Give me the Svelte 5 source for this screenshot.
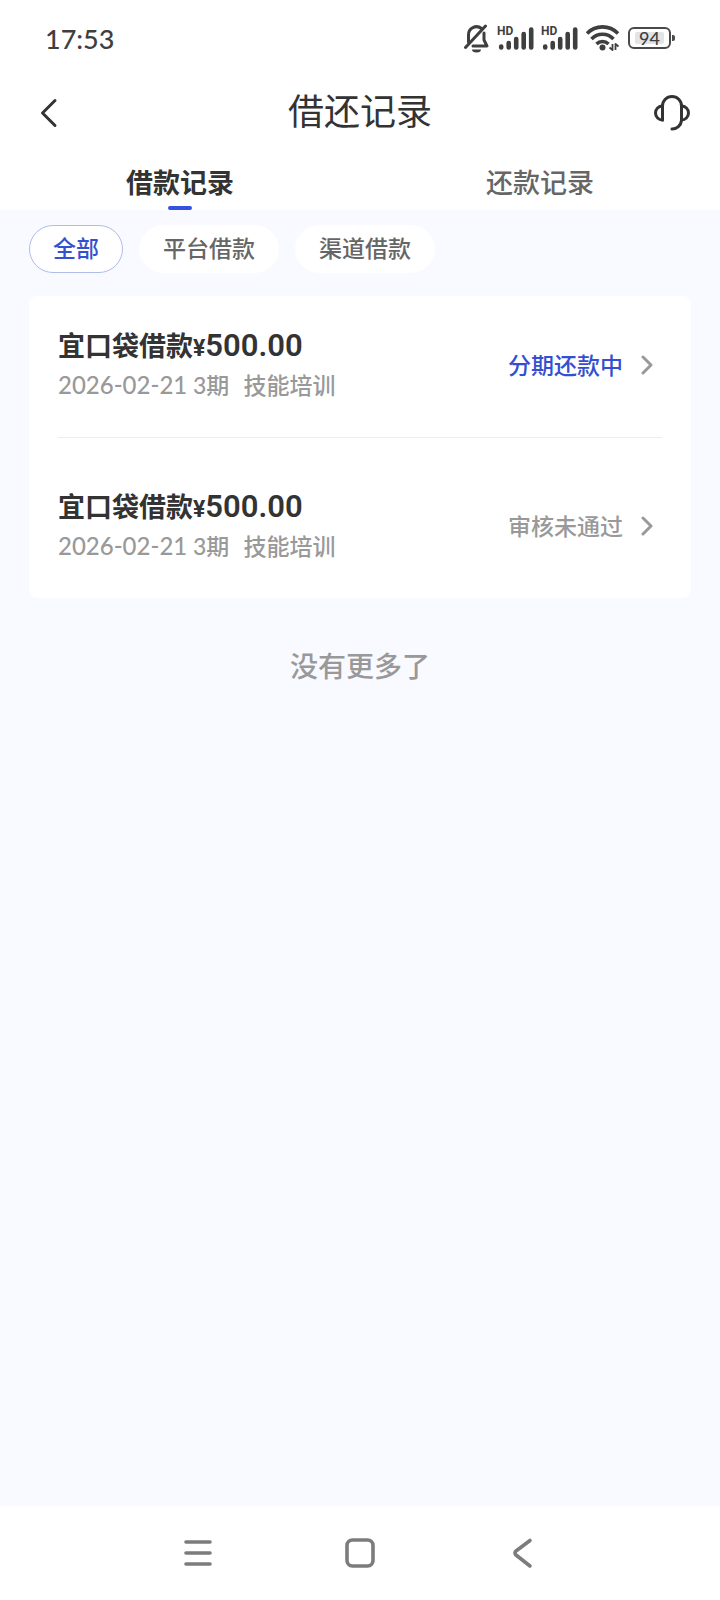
<script>
  const tabs = ['借款记录', '还款记录'];
  const filters = ['全部', '平台借款', '渠道借款'];
  const records = [
    { id: 1, name: '宜口袋借款', amount: '500.00', date: '2026-02-21', term: '3期', usage: '技能培训', status: '分期还款中', active: true },
    { id: 2, name: '宜口袋借款', amount: '500.00', date: '2026-02-21', term: '3期', usage: '技能培训', status: '审核未通过', active: false },
  ];

  let currentTab = $state(0);
  let currentFilter = $state(0);
</script>

{#snippet signal()}
  <svg class="signal" viewBox="0 0 36 28">
    <text x="-1" y="11">HD</text>
    <path d="M3.200 22.500v1M10.700 19v4.500M18.200 15v8.500M25.700 10v13.500M33.200 5.500v18" />
  </svg>
{/snippet}

<div class="page">
  <div class="status-bar">
    <time>17:53</time>
    <div class="indicators">
      <svg class="bell" viewBox="0 0 26 30" aria-hidden="true">
        <path class="line" d="M4.500 19V12a8 8 0 0 1 13-6.500M20 10v7l3 6H9" />
        <path class="line" d="M1.500 24.500L21.500 3" />
        <path d="M8 26.500h9a4.500 3 0 0 1-9 0z" fill="#3f3f3f" />
      </svg>
      {@render signal()}
      {@render signal()}
      <svg class="wifi" viewBox="0 0 34 26" aria-hidden="true">
        <path d="M1 8.500a21.500 21.500 0 0 1 31 0M5.500 14a15 15 0 0 1 22 0M10.500 19a8.500 8.500 0 0 1 12 0" />
        <circle cx="16.500" cy="22.500" r="3" />
        <path class="arrows" d="M26.500 19v6l-3-2.500M29.500 25v-6l3 2.500" />
      </svg>
      <div class="battery"><span>94</span></div>
    </div>
  </div>

  <header>
    <button class="icon-btn" aria-label="返回">
      <svg class="back" viewBox="0 0 18 30"><path d="M15 2.500L2.500 15 15 27.500" /></svg>
    </button>
    <h1>借还记录</h1>
    <button class="icon-btn end" aria-label="客服">
      <svg class="headset" viewBox="0 0 38 38">
        <path d="M9.500 26V12a9.500 9.500 0 0 1 19 0v14.500a9.500 9.500 0 0 1-9.500 8.500" />
        <path d="M9.500 12a7 7 0 0 0 0 14M28.500 12a7 7 0 0 1 0 14" />
      </svg>
    </button>
  </header>

  <nav class="tabs">
    {#each tabs as tab, i}
      <button class:active={currentTab === i} onclick={() => (currentTab = i)}>{tab}</button>
    {/each}
  </nav>

  <main>
    <div class="filters">
      {#each filters as filter, i}
        <button class:active={currentFilter === i} onclick={() => (currentFilter = i)}>{filter}</button>
      {/each}
    </div>

    <ul class="card">
      {#each records as record (record.id)}
        <li>
          <a href="#record-{record.id}">
            <div class="info">
              <strong>{record.name}<span class="yen">¥</span><span class="amount">{record.amount}</span></strong>
              <p><span class="date">{record.date}</span> {record.term}<span class="usage">{record.usage}</span></p>
            </div>
            <span class="state" class:active={record.active}>{record.status}</span>
            <svg class="chevron" viewBox="0 0 12 20" aria-hidden="true"><path d="M2 2l8 8-8 8" /></svg>
          </a>
        </li>
      {/each}
    </ul>

    <p class="end-text">没有更多了</p>
  </main>

  <div class="system-nav">
    <button aria-label="最近任务">
      <svg viewBox="0 0 32 32"><path d="M4 5h24M4 16h24M4 27h24" /></svg>
    </button>
    <button aria-label="主屏幕">
      <svg viewBox="0 0 32 32"><rect x="3" y="3" width="26" height="26" rx="5.500" /></svg>
    </button>
    <button aria-label="系统返回">
      <svg viewBox="0 0 32 32"><path d="M24 3.500L10 14a2.500 2.500 0 0 0 0 4l14 11" /></svg>
    </button>
  </div>
</div>

<style>
  :global(body) {
    margin: 0;
    background: #f8faff;
  }

  .page {
    display: flex;
    flex-direction: column;
    min-height: 100vh;
    color: #333;
    font-family: Lato, 'Noto Sans CJK SC', sans-serif;
  }

  button {
    padding: 0;
    border: 0;
    background: none;
    color: inherit;
    font: inherit;
    cursor: pointer;
  }

  svg {
    display: block;
    flex: none;
    fill: none;
    stroke-linecap: round;
    stroke-linejoin: round;
  }

  .status-bar {
    display: flex;
    align-items: center;
    justify-content: space-between;
    height: 76px;
    padding: 0 45px;
    background: #fff;
  }

  time {
    color: #3f3f3f;
    font-family: Lato, sans-serif;
    font-size: 27px;
    font-weight: 500;
  }

  .indicators {
    display: flex;
    align-items: center;
    gap: 8px;
  }

  .bell {
    width: 26px;
    height: 30px;
  }

  .bell .line {
    stroke: #3f3f3f;
    stroke-width: 3;
  }

  .signal {
    width: 36px;
    height: 28px;
    overflow: visible;
  }

  .signal text {
    fill: #3f3f3f;
    font-family: Roboto, sans-serif;
    font-size: 12px;
    font-weight: 700;
  }

  .signal path {
    stroke: #3f3f3f;
    stroke-width: 4.6;
  }

  .wifi {
    width: 34px;
    height: 26px;
    stroke: #3f3f3f;
    stroke-width: 3.6;
    stroke-linecap: butt;
  }

  .wifi circle {
    fill: #3f3f3f;
    stroke: none;
  }

  .wifi .arrows {
    stroke-width: 1.8;
  }

  .battery {
    position: relative;
    box-sizing: border-box;
    width: 43px;
    height: 22px;
    margin-right: 4px;
    padding: 3px 5px;
    border: 2px solid #4a4a4a;
    border-radius: 6px;
  }

  .battery::after {
    position: absolute;
    top: 6px;
    right: -6px;
    width: 3px;
    height: 6px;
    border-radius: 0 2px 2px 0;
    background: #4a4a4a;
    content: '';
  }

  .battery span {
    display: block;
    border-radius: 2px;
    background: #e4e4e4;
    color: #3f3f3f;
    font-size: 18px;
    font-weight: 500;
    line-height: 12px;
    text-align: center;
  }

  header {
    display: grid;
    grid-template-columns: 1fr auto 1fr;
    align-items: center;
    height: 74px;
    padding: 0 29px;
    background: #fff;
  }

  .icon-btn {
    justify-self: start;
    padding-left: 11px;
  }

  .icon-btn.end {
    justify-self: end;
    padding-left: 0;
  }

  .back {
    width: 18px;
    height: 30px;
    stroke: #333;
    stroke-width: 3;
  }

  .headset {
    width: 38px;
    height: 38px;
    stroke: #333;
    stroke-width: 3;
  }

  h1 {
    margin: 0;
    padding-bottom: 4px;
    font-size: 36px;
    font-weight: 400;
    line-height: 48px;
  }

  .tabs {
    display: grid;
    grid-template-columns: 1fr 1fr;
    background: #fff;
  }

  .tabs button {
    position: relative;
    height: 60px;
    padding-top: 2px;
    color: #666;
    font-size: 27px;
    font-weight: 500;
  }

  .tabs .active {
    color: #333;
    font-weight: 700;
  }

  .tabs .active::after {
    position: absolute;
    bottom: 0;
    left: 50%;
    width: 24px;
    height: 4px;
    border-radius: 2px;
    background: #3651e0;
    transform: translateX(-50%);
    content: '';
  }

  main {
    flex: 1;
    padding: 15px 29px;
    background: #f8faff;
  }

  .filters {
    display: flex;
    gap: 16px;
  }

  .filters button {
    height: 48px;
    padding: 0 23px 2px;
    border: 1px solid #fff;
    border-radius: 24px;
    background: #fff;
    color: #666;
    font-size: 23px;
    font-weight: 500;
    line-height: 32px;
  }

  .filters .active {
    border-color: #b0bce8;
    color: #3450d0;
  }

  .card {
    margin: 23px 0 0;
    padding: 30px 29px 0;
    border-radius: 8px;
    background: #fff;
    list-style: none;
  }

  li + li {
    padding-top: 49px;
    border-top: 1px solid #ececec;
  }

  a {
    display: flex;
    align-items: center;
    padding: 0 9px 33px 0;
    color: inherit;
    text-decoration: none;
  }

  .info {
    flex: 1;
  }

  strong {
    display: block;
    height: 40px;
    font-size: 27px;
    font-weight: 700;
    line-height: 40px;
  }

  .yen,
  .amount {
    font-family: Roboto, sans-serif;
    line-height: 32px;
  }

  .yen {
    font-size: 23px;
  }

  .amount {
    font-size: 31px;
    font-weight: 600;
  }

  p {
    height: 38px;
    margin: 0;
    color: #999;
    font-size: 23px;
    font-weight: 500;
    line-height: 38px;
  }

  .date {
    font-size: 24px;
  }

  .usage {
    margin-left: 14px;
  }

  .state {
    color: #999;
    font-size: 23px;
    font-weight: 500;
    line-height: 32px;
  }

  .state.active {
    color: #3450d0;
  }

  .chevron {
    width: 12px;
    height: 20px;
    margin-left: 18px;
    stroke: #999;
    stroke-width: 3;
  }

  .end-text {
    margin-top: 48px;
    font-size: 28px;
    line-height: 40px;
    text-align: center;
  }

  .system-nav {
    display: grid;
    grid-template-columns: repeat(3, 162px);
    justify-content: center;
    height: 94px;
    background: #fff;
  }

  .system-nav button {
    display: grid;
    place-items: center;
  }

  .system-nav svg {
    width: 32px;
    height: 32px;
    stroke: #7c7c7c;
    stroke-width: 3.6;
  }
</style>
